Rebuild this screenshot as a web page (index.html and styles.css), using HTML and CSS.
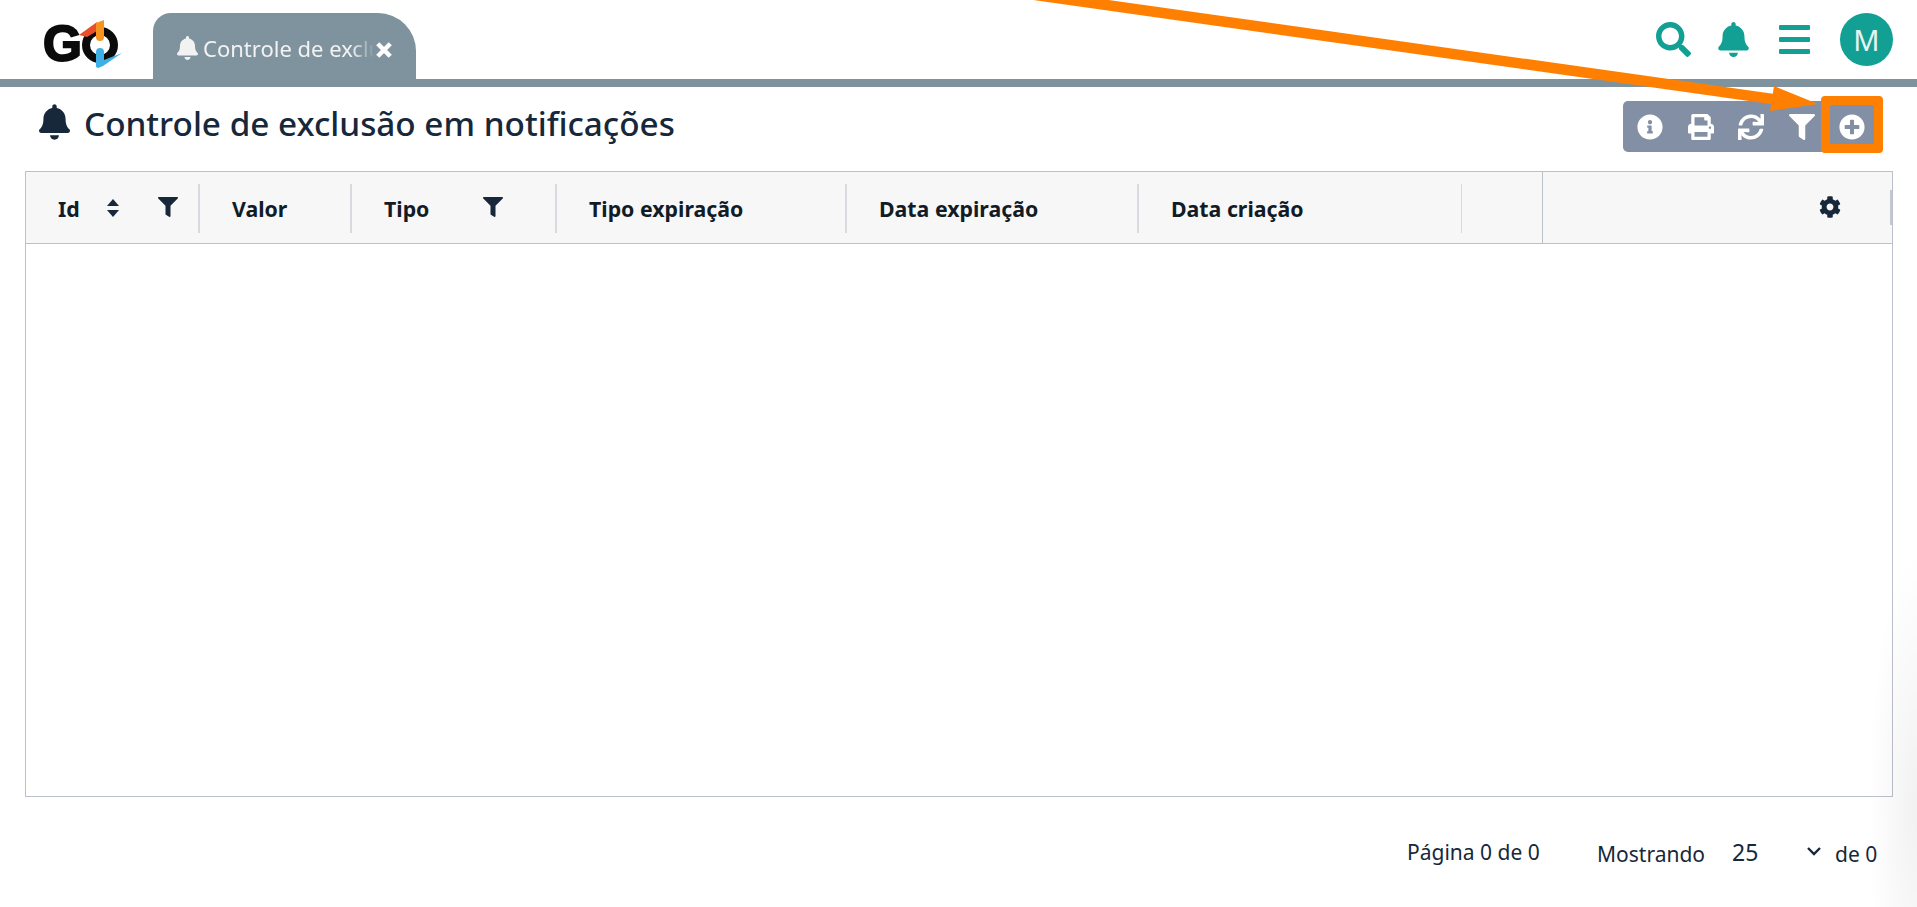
FILE: index.html
```html
<!DOCTYPE html>
<html>
<head>
    <meta charset="UTF-8">
    <title>Controle de exclusão em notificações</title>
    <link rel="stylesheet" href="styles.css">
</head>
<body>
    <svg width="0" height="0" class="defs">
        <symbol id="i-bell" viewBox="0 0 448 512"><path d="M224 512c35.32 0 63.97-28.65 63.97-64H160.03c0 35.35 28.65 64 63.97 64zm215.39-149.71c-19.32-20.76-55.47-51.99-55.47-154.29 0-77.7-54.48-139.9-127.94-155.16V32c0-17.67-14.32-32-31.98-32s-31.98 14.33-31.98 32v20.84C118.56 68.1 64.08 130.3 64.08 208c0 102.3-36.15 133.53-55.47 154.29-6 6.45-8.66 14.16-8.61 21.71.11 16.4 12.98 32 32.1 32h383.8c19.12 0 32-15.6 32.1-32 .05-7.55-2.61-15.27-8.61-21.71z"/></symbol>
        <symbol id="i-filter" viewBox="0 0 512 512"><path d="M487.976 0H24.028C2.71 0-8.047 25.866 7.058 40.971L192 225.941V432c0 7.831 3.821 15.17 10.237 19.662l80 55.98C298.02 518.69 320 507.493 320 487.98V225.941l184.947-184.97C520.021 25.896 509.338 0 487.976 0z"/></symbol>
    </svg>

    <div class="header">
        <svg class="logo" viewBox="0 0 100 56" width="100" height="56">
            <text x="0" y="44" class="logo-g">G</text>
            <circle cx="57" cy="28" r="14" fill="none" stroke="#0b0b0b" stroke-width="8"/>
            <path d="M36 18 L54 5 L54 14 L44 20 Z" fill="#e8502a"/>
            <path d="M53 6 L61 3 V20 Q61 24 57 24 Q53 24 53 20 Z" fill="#f7931e"/>
            <path d="M53 35 Q53 31 57 31 Q61 31 61 35 V43 L79 36 L60 49 L55 51 L53 50 Z" fill="#3fb0e6"/>
        </svg>
        <div class="tab">
            <svg class="tab-bell"><use href="#i-bell"/></svg>
            <span class="tab-label">Controle de exclusão em notificações</span>
            <svg class="tab-close" viewBox="0 0 16 16"><path d="M3 3 L13 13 M13 3 L3 13"/></svg>
        </div>
        <div class="header-actions">
            <svg class="head-icon search" viewBox="0 0 512 512"><path d="M505 442.7L405.3 343c-4.5-4.5-10.6-7-17-7H372c27.6-35.3 44-79.7 44-128C416 93.1 322.9 0 208 0S0 93.1 0 208s93.1 208 208 208c48.3 0 92.7-16.4 128-44v16.3c0 6.4 2.5 12.5 7 17l99.7 99.7c9.4 9.4 24.6 9.4 33.9 0l28.3-28.3c9.4-9.4 9.4-24.6.1-34zM208 336c-70.7 0-128-57.2-128-128 0-70.7 57.2-128 128-128 70.7 0 128 57.2 128 128 0 70.7-57.2 128-128 128z"/></svg>
            <svg class="head-icon bell"><use href="#i-bell"/></svg>
            <div class="bars"><span></span><span></span><span></span></div>
            <div class="avatar">M</div>
        </div>
    </div>

    <div class="title-row">
        <h1 class="title">
            <svg class="title-bell"><use href="#i-bell"/></svg>
            Controle de exclusão em notificações
        </h1>
        <div class="toolbar">
            <button class="tool"><svg viewBox="0 0 512 512"><path d="M256 8C119.043 8 8 119.083 8 256c0 136.997 111.043 248 248 248s248-111.003 248-248C504 119.083 392.957 8 256 8zm0 110c23.196 0 42 18.804 42 42s-18.804 42-42 42-42-18.804-42-42 18.804-42 42-42zm56 254c0 6.627-5.373 12-12 12h-88c-6.627 0-12-5.373-12-12v-24c0-6.627 5.373-12 12-12h12v-64h-12c-6.627 0-12-5.373-12-12v-24c0-6.627 5.373-12 12-12h64c6.627 0 12 5.373 12 12v100h12c6.627 0 12 5.373 12 12v24z"/></svg></button>
            <button class="tool"><svg viewBox="0 0 512 512"><path d="M448 192V77.25c0-8.49-3.37-16.62-9.37-22.63L393.37 9.37c-6-6-14.14-9.37-22.63-9.37H96C78.33 0 64 14.33 64 32v160c-35.35 0-64 28.65-64 64v112c0 8.84 7.16 16 16 16h48v96c0 17.67 14.33 32 32 32h320c17.67 0 32-14.33 32-32v-96h48c8.84 0 16-7.16 16-16V256c0-35.35-28.65-64-64-64zm-64 256H128v-96h256v96zm0-224H128V64h192v48c0 8.84 7.16 16 16 16h48v96zm48 72c-13.25 0-24-10.75-24-24 0-13.26 10.75-24 24-24s24 10.74 24 24c0 13.25-10.75 24-24 24z"/></svg></button>
            <button class="tool"><svg viewBox="0 0 512 512"><path d="M440.65 12.57l4 82.77A247.16 247.16 0 0 0 255.83 8C134.73 8 33.91 94.92 12.29 209.82A12 12 0 0 0 24.09 224h49.05a12 12 0 0 0 11.67-9.26 175.91 175.91 0 0 1 317-56.94l-101.46-4.86a12 12 0 0 0-12.57 12v47.41a12 12 0 0 0 12 12H500a12 12 0 0 0 12-12V12a12 12 0 0 0-12-12h-47.37a12 12 0 0 0-11.98 12.57zM255.83 432a175.61 175.61 0 0 1-146-77.8l101.8 4.87a12 12 0 0 0 12.57-12v-47.4a12 12 0 0 0-12-12H12a12 12 0 0 0-12 12V500a12 12 0 0 0 12 12h47.35a12 12 0 0 0 12-12.6l-4.15-82.57A247.17 247.17 0 0 0 255.83 504c121.11 0 221.93-86.92 243.55-201.82a12 12 0 0 0-11.8-14.18h-49.05a12 12 0 0 0-11.67 9.26A175.86 175.86 0 0 1 255.83 432z"/></svg></button>
            <button class="tool"><svg><use href="#i-filter"/></svg></button>
            <button class="tool tool-add"><svg viewBox="0 0 512 512"><path d="M256 8C119 8 8 119 8 256s111 248 248 248 248-111 248-248S393 8 256 8zm144 276c0 6.6-5.4 12-12 12h-92v92c0 6.6-5.4 12-12 12h-56c-6.6 0-12-5.4-12-12v-92h-92c-6.6 0-12-5.4-12-12v-56c0-6.6 5.4-12 12-12h92v-92c0-6.6 5.4-12 12-12h56c6.6 0 12 5.4 12 12v92h92c6.6 0 12 5.4 12 12v56z"/></svg></button>
        </div>
    </div>

    <div class="grid">
        <div class="grid-head">
            <div class="columns">
                <div class="col col-id">
                    <span>Id</span>
                    <svg class="sort" viewBox="0 0 14 20"><path d="M7 1 L13 8 H1 Z M1 12 H13 L7 19 Z"/></svg>
                    <svg class="col-filter"><use href="#i-filter"/></svg>
                </div>
                <div class="col col-valor"><span>Valor</span></div>
                <div class="col col-tipo">
                    <span>Tipo</span>
                    <svg class="col-filter"><use href="#i-filter"/></svg>
                </div>
                <div class="col col-exp"><span>Tipo expiração</span></div>
                <div class="col col-data"><span>Data expiração</span></div>
                <div class="col col-criacao"><span>Data criação</span></div>
            </div>
            <div class="col-settings">
                <svg class="gear" viewBox="0 0 512 512"><path d="M487.4 315.7l-42.6-24.6c4.3-23.2 4.3-47 0-70.2l42.6-24.6c4.9-2.8 7.1-8.6 5.5-14-11.1-35.6-30-67.8-54.7-94.6-3.8-4.1-10-5.1-14.8-2.3L380.8 110c-17.9-15.4-38.5-27.3-60.8-35.1V25.8c0-5.6-3.9-10.5-9.4-11.7-36.7-8.2-74.3-7.8-109.2 0-5.5 1.2-9.4 6.1-9.4 11.7V75c-22.2 7.9-42.8 19.8-60.8 35.1L88.7 85.5c-4.9-2.8-11-1.9-14.8 2.3-24.7 26.7-43.6 58.9-54.7 94.6-1.7 5.4.6 11.2 5.5 14L67.3 221c-4.3 23.2-4.3 47 0 70.2l-42.6 24.6c-4.9 2.8-7.1 8.6-5.5 14 11.1 35.6 30 67.8 54.7 94.6 3.8 4.1 10 5.1 14.8 2.3l42.6-24.6c17.9 15.4 38.5 27.3 60.8 35.1v49.2c0 5.6 3.9 10.5 9.4 11.7 36.7 8.2 74.3 7.8 109.2 0 5.5-1.2 9.4-6.1 9.4-11.7v-49.2c22.2-7.9 42.8-19.8 60.8-35.1l42.6 24.6c4.9 2.8 11 1.9 14.8-2.3 24.7-26.7 43.6-58.9 54.7-94.6 1.5-5.5-.7-11.3-5.6-14.1zM256 336c-44.1 0-80-35.9-80-80s35.9-80 80-80 80 35.9 80 80-35.9 80-80 80z"/></svg>
                <span class="resize-grip"></span>
            </div>
        </div>
        <div class="grid-body"></div>
    </div>

    <div class="pager">
        <span class="page-info">Página 0 de 0</span>
        <span class="page-size">Mostrando</span>
        <span class="page-count">25</span>
        <svg class="chevron" viewBox="0 0 16 10"><path d="M2 2 L8 8 L14 2"/></svg>
        <span class="page-size">de 0</span>
    </div>

    <div class="edge-shade"></div>

    <!-- annotation drawn over the page -->
    <svg class="arrow" width="1917" height="907" viewBox="0 0 1917 907">
        <path d="M1000 -10 L1780 100" stroke="#ff8000" stroke-width="10.5" fill="none"/>
        <path d="M1774 86 L1818 104 L1770 111 Z" fill="#ff8000"/>
    </svg>
    <div class="highlight"></div>
</body>
</html>
```

FILE: styles.css
```css
body {
    margin: 0;
    height: 907px;
    overflow: hidden;
    font-family: "Noto Sans", "Open Sans", sans-serif;
    background: #fff;
    color: #16283a;
    position: relative;
}

.defs {
    position: absolute;
}

.header {
    display: flex;
    align-items: flex-end;
    height: 79px;
    border-bottom: 8px solid #7f939e;
    padding-left: 43px;
}

.logo {
    align-self: flex-start;
    margin-top: 17px;
    margin-right: 10px;
}

.logo-g {
    font-family: "Liberation Sans", sans-serif;
    font-weight: 700;
    font-size: 50px;
    fill: #0b0b0b;
    stroke: #0b0b0b;
    stroke-width: 2px;
}

.tab {
    width: 263px;
    height: 74px;
    margin-bottom: -8px;
    background: #7f939e;
    border-radius: 18px 38px 0 0;
    color: #f2f2f2;
    display: flex;
    align-items: center;
    padding: 0 24px;
    box-sizing: border-box;
    font-size: 22px;
    position: relative;
}

.tab-bell {
    width: 21px;
    height: 24px;
    fill: #f2f2f2;
    flex: none;
    margin-right: 5px;
    margin-top: -4px;
}

.tab-label {
    white-space: nowrap;
    overflow: hidden;
    flex: 1;
    margin-top: -4px;
    -webkit-mask-image: linear-gradient(to right, #000 148px, transparent 172px);
    mask-image: linear-gradient(to right, #000 148px, transparent 172px);
}

.tab-close {
    width: 20px;
    height: 20px;
    flex: none;
    margin-left: -14px;
    margin-right: -2px;
    fill: none;
    stroke: #fff;
    stroke-width: 3.6;
}

.header-actions {
    margin-left: auto;
    align-self: stretch;
    display: flex;
    align-items: center;
    padding-right: 24px;
}

.head-icon {
    fill: #12a094;
    height: 35px;
}

.search {
    width: 35px;
    margin-right: 27px;
}

.bell {
    width: 31px;
    margin-right: 30px;
}

.bars {
    width: 31px;
    display: flex;
    flex-direction: column;
    gap: 7px;
    margin-right: 30px;
}

.bars span {
    height: 5px;
    background: #12a094;
    border-radius: 1px;
}

.avatar {
    width: 53px;
    height: 53px;
    border-radius: 50%;
    background: #12a094;
    color: #e6f3f2;
    font-size: 29px;
    display: flex;
    align-items: center;
    justify-content: center;
}

.title-row {
    display: flex;
    align-items: flex-start;
    justify-content: space-between;
    height: 84px;
    padding-left: 39px;
    padding-right: 34px;
}

.title {
    margin: 14px 0 0;
    font-size: 33.3px;
    font-weight: 500;
    line-height: 44px;
    display: flex;
    align-items: center;
    gap: 14px;
}

.title-bell {
    width: 31px;
    height: 36px;
    fill: #16283a;
    margin-top: -3px;
}

.toolbar {
    margin-top: 14px;
    width: 260px;
    height: 51px;
    background: #838fa5;
    border-radius: 5px;
    display: flex;
    align-items: center;
    padding-left: 2px;
    box-sizing: border-box;
}

.tool {
    width: 50.5px;
    height: 51px;
    border: 0;
    padding: 0;
    background: none;
    display: flex;
    align-items: center;
    justify-content: center;
}

.tool svg {
    width: 26px;
    height: 26px;
    fill: #fff;
}

.grid {
    margin: 0 24px 0 25px;
    height: 626px;
    border: 1px solid #bcc0cc;
    box-sizing: border-box;
}

.grid-head {
    height: 72px;
    display: flex;
    background: #f7f7f7;
    border-bottom: 1px solid #bcc0cc;
    box-sizing: border-box;
}

.columns {
    display: flex;
    align-items: center;
    width: 1516px;
    border-right: 1px solid #bcc0cc;
    box-sizing: content-box;
}

.col {
    height: 49px;
    margin-top: 1px;
    display: flex;
    align-items: center;
    border-right: 2px solid #d9dae0;
    box-sizing: border-box;
    padding-left: 32px;
    font-size: 21.3px;
    font-weight: 700;
    color: #111c26;
}

.col-id { width: 174px; }
.col-valor { width: 152px; }
.col-tipo { width: 205px; }
.col-exp { width: 290px; }
.col-data { width: 292px; }
.col-criacao { width: 323px; border-right-width: 1px; }

.sort {
    width: 14px;
    height: 20px;
    fill: #16283a;
    margin-left: 26px;
}

.col-filter {
    width: 20px;
    height: 20px;
    fill: #16283a;
    margin-top: -2px;
    margin-left: 38px;
}

.col-tipo .col-filter {
    margin-left: 54px;
}

.col-settings {
    flex: 1;
    display: flex;
    align-items: center;
    justify-content: flex-end;
}

.gear {
    width: 22px;
    height: 22px;
    fill: #16283a;
    margin-top: -1px;
    margin-right: 49px;
}

.resize-grip {
    width: 2px;
    height: 35px;
    background: #c4c6d0;
}

.grid-body {
    height: 552px;
}

.pager {
    display: flex;
    align-items: center;
    height: 112px;
    padding-left: 1407px;
    font-size: 21px;
    color: #16283a;
}

.page-info {
    width: 190px;
    margin-top: -3px;
}

.page-size {
    margin-top: 1px;
}

.page-count {
    font-size: 23px;
    margin-left: 27px;
    width: 74px;
    margin-top: -2px;
}

.chevron {
    width: 16px;
    height: 10px;
    fill: none;
    stroke: #16283a;
    stroke-width: 2.4;
    margin-right: 13px;
    margin-top: -4px;
}

.edge-shade {
    position: absolute;
    right: 0;
    top: 560px;
    width: 60px;
    height: 347px;
    background: radial-gradient(ellipse 48px 260px at 100% 72%, rgba(0, 0, 0, 0.055), transparent);
    pointer-events: none;
}

.arrow {
    position: absolute;
    left: 0;
    top: 0;
    pointer-events: none;
}

.highlight {
    position: absolute;
    left: 1821px;
    top: 96px;
    width: 62px;
    height: 57px;
    border: 9px solid #ff8000;
    border-radius: 4px;
    box-sizing: border-box;
}
```
